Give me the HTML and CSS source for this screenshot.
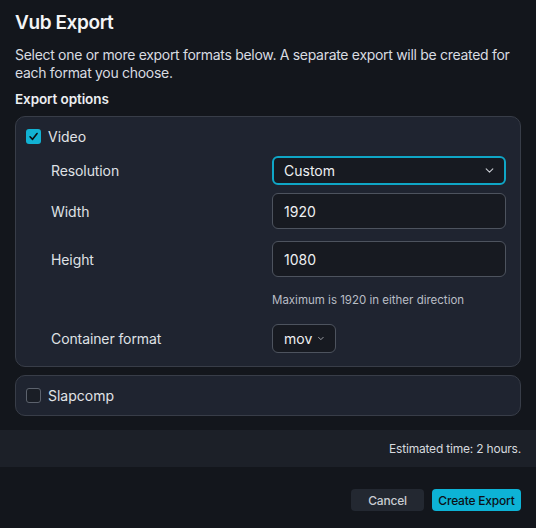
FILE: index.html
```html
<!DOCTYPE html>
<html lang="en">
<head>
<meta charset="utf-8">
<title>Vub Export</title>
<link rel="stylesheet" href="styles.css">
</head>
<body>
<div class="dialog">
  <div class="content">
    <h1 class="title">Vub Export</h1>
    <p class="desc">Select one or more export formats below. A separate export will be created for each format you choose.</p>
    <h2 class="section">Export options</h2>

    <div class="card">
      <div class="check-row">
        <span class="checkbox checked">
          <svg viewBox="0 0 16 16" width="15" height="15"><path d="M4.3 8.3 L7 11 L11.8 4.8" fill="none" stroke="#0b0e12" stroke-width="1.7" stroke-linecap="round" stroke-linejoin="round"/></svg>
        </span>
        <span class="check-label">Video</span>
      </div>
      <div class="fields">
        <div class="field f-res">
          <span class="label">Resolution</span>
          <div class="select focused">
            <span>Custom</span>
            <svg class="chev" viewBox="0 0 10 6" width="9" height="5"><path d="M1 1 L5 5 L9 1" fill="none" stroke="#c9ccd2" stroke-width="1.3" stroke-linecap="round" stroke-linejoin="round"/></svg>
          </div>
        </div>
        <div class="field f-width">
          <span class="label">Width</span>
          <div class="input">1920</div>
        </div>
        <div class="field f-height">
          <span class="label">Height</span>
          <div class="input">1080</div>
        </div>
        <div class="field f-help">
          <span class="label"></span>
          <span class="help">Maximum is 1920 in either direction</span>
        </div>
        <div class="field f-fmt">
          <span class="label">Container format</span>
          <div class="select small">
            <span>mov</span>
            <svg class="chev" viewBox="0 0 10 6" width="8" height="5"><path d="M1 1 L5 5 L9 1" fill="none" stroke="#c9ccd2" stroke-width="1.3" stroke-linecap="round" stroke-linejoin="round"/></svg>
          </div>
        </div>
      </div>
    </div>

    <div class="card card-plain">
      <div class="check-row">
        <span class="checkbox"></span>
        <span class="check-label">Slapcomp</span>
      </div>
    </div>
  </div>

  <div class="estimate">Estimated time: 2 hours.</div>

  <div class="actions">
    <button class="btn btn-cancel">Cancel</button>
    <button class="btn btn-primary">Create Export</button>
  </div>
</div>
</body>
</html>
```

FILE: styles.css
```css
* { box-sizing: border-box; }

html, body {
  margin: 0;
  padding: 0;
  background: #13161c;
}

body {
  font-family: "Inter", "Noto Sans", sans-serif;
  color: #e6e8ec;
}

.dialog {
  width: 536px;
  height: 528px;
}

.content {
  padding: 11px 15px 0 15px;
}

.title {
  margin: 0;
  font-size: 19px;
  line-height: 24px;
  font-weight: 600;
  letter-spacing: -0.4px;
  color: #f3f4f6;
}

.desc {
  margin: 11px 0 0 0;
  font-size: 14px;
  line-height: 17.5px;
  letter-spacing: -0.3px;
  color: #d9dce1;
}

.section {
  margin: 8px 0 0 0;
  font-size: 13.5px;
  line-height: 20px;
  font-weight: 600;
  letter-spacing: -0.1px;
  color: #eceef1;
}

.card {
  margin-top: 7px;
  background: #1f2430;
  border: 1px solid #383d48;
  border-radius: 10px;
  padding: 10px 14px 13px 10px;
}

.card-plain {
  margin-top: 8px;
  padding: 10px 10px 11px 10px;
}

.check-row {
  display: flex;
  align-items: center;
  gap: 7px;
  height: 18px;
}

.checkbox {
  width: 15px;
  height: 15px;
  border-radius: 3px;
  border: 1.5px solid #5c626d;
  background: #1a1e26;
  display: flex;
  align-items: center;
  justify-content: center;
}

.checkbox.checked {
  border: none;
  background: #12b2d3;
}

.check-label {
  font-size: 14px;
  color: #e1e3e7;
}

.fields {
  margin-top: 11px;
  padding-left: 25px;
  display: flex;
  flex-direction: column;
}

.field {
  display: grid;
  grid-template-columns: 221px 1fr;
  align-items: center;
}

.f-width { margin-top: 8px; }
.f-height { margin-top: 12px; }
.f-help { margin-top: 15px; }
.f-fmt { margin-top: 16px; }

.label {
  font-size: 14px;
  letter-spacing: -0.1px;
  color: #dfe1e5;
}

.select,
.input {
  height: 36px;
  background: #171a21;
  border: 1px solid #4d535e;
  border-radius: 6px;
  padding: 0 11px;
  display: flex;
  align-items: center;
  font-size: 14px;
  color: #eef0f2;
}

.select {
  height: 29px;
  justify-content: space-between;
}

.select.focused {
  border: 2px solid #0fa6c6;
  padding: 0 10px;
}

.select.small {
  width: 64px;
  justify-content: flex-start;
  gap: 6px;
}

.help {
  font-size: 11.5px;
  line-height: 16px;
  color: #b9bdc5;
}

.estimate {
  margin-top: 14px;
  height: 37px;
  background: #1c2028;
  display: flex;
  align-items: center;
  justify-content: flex-end;
  padding: 0 15px;
  font-size: 12px;
  letter-spacing: -0.2px;
  color: #d6d9de;
}

.actions {
  margin-top: 22px;
  display: flex;
  justify-content: flex-end;
  gap: 8px;
  padding: 0 15px;
}

.btn {
  height: 22px;
  border: none;
  border-radius: 4px;
  font-family: "Inter", "Noto Sans", sans-serif;
  font-size: 12px;
  font-weight: 500;
  letter-spacing: -0.2px;
  padding: 0;
  cursor: pointer;
}

.btn-cancel {
  width: 73px;
  background: #232831;
  color: #c9ccd2;
}

.btn-primary {
  width: 89px;
  background: #0db3d6;
  color: #0c1015;
}
```
